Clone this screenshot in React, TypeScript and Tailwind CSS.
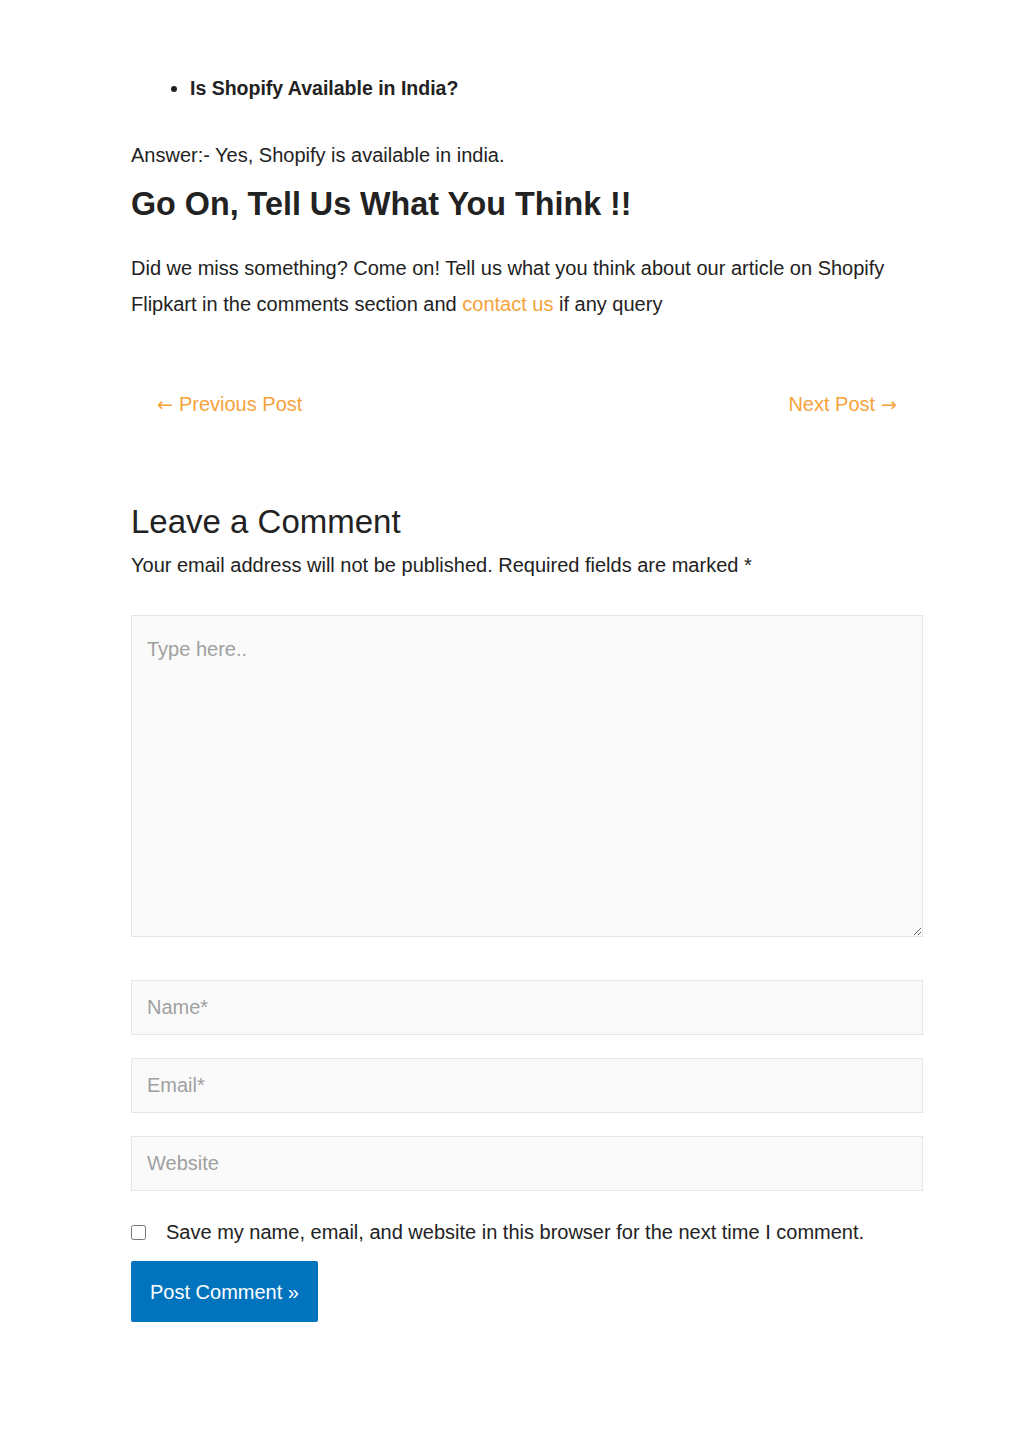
import React from "react";

const App: React.FC = () => {
	return (
		<div className="min-h-[1449px] bg-white font-['Liberation_Sans',Arial,sans-serif] text-[#222]">
			<div className="w-[792px] ml-[131px] pt-[75px]">
				<ul className="list-disc pl-[59px] text-[19.5px] leading-[27px] font-bold">
					<li>Is Shopify Available in India?</li>
				</ul>

				<p className="mt-[40px] text-[20px] leading-[27px]">
					Answer:- Yes, Shopify is available in india.
				</p>

				<h2 className="mt-[15px] text-[32.3px] leading-[40px] font-bold">
					Go On, Tell Us What You Think !!
				</h2>

				<p className="mt-[26px] text-[20px] leading-[36px]">
					Did we miss something? Come on! Tell us what you think about our article on Shopify
					Flipkart in the comments section and{" "}
					<a href="#" className="text-[#f5a23b]">
						contact us
					</a>{" "}
					if any query
				</p>

				<div className="mt-[70px] flex justify-between px-[26px] text-[20px] leading-[24px] text-[#f5a23b]">
					<a href="#" className="flex items-center gap-[6px]">
						<span className="font-['DejaVu_Sans',sans-serif] text-[19px] leading-[24px]">←</span>
						<span>Previous Post</span>
					</a>
					<a href="#" className="flex items-center gap-[6px]">
						<span>Next Post</span>
						<span className="font-['DejaVu_Sans',sans-serif] text-[19px] leading-[24px]">→</span>
					</a>
				</div>

				<h2 className="mt-[86px] text-[33px] leading-[40px] font-normal">Leave a Comment</h2>
				<p className="mt-[10px] text-[20px] leading-[27px]">
					Your email address will not be published. Required fields are marked *
				</p>

				<form className="mt-[36px] flex flex-col">
					<textarea
						placeholder="Type here.."
						className="h-[322px] w-full bg-[#fafafa] border border-[#e6e6e6] px-[15px] py-[20px] text-[20px] leading-[27px] placeholder:text-[#a0a0a0] outline-none resize-y"
					/>
					<input
						placeholder="Name*"
						className="mt-[43px] h-[55px] w-full bg-[#fafafa] border border-[#e6e6e6] px-[15px] text-[20px] placeholder:text-[#a0a0a0] outline-none"
					/>
					<input
						placeholder="Email*"
						className="mt-[23px] h-[55px] w-full bg-[#fafafa] border border-[#e6e6e6] px-[15px] text-[20px] placeholder:text-[#a0a0a0] outline-none"
					/>
					<input
						placeholder="Website"
						className="mt-[23px] h-[55px] w-full bg-[#fafafa] border border-[#e6e6e6] px-[15px] text-[20px] placeholder:text-[#a0a0a0] outline-none"
					/>
					<label className="mt-[28px] flex items-center gap-[20px] text-[20px] leading-[27px]">
						<input type="checkbox" className="w-[15px] h-[15px] m-0" />
						Save my name, email, and website in this browser for the next time I comment.
					</label>
					<div className="mt-[15px]">
						<button
							type="button"
							className="h-[61px] px-[19px] bg-[#0274be] text-white text-[20px] rounded-[2px]"
						>
							Post Comment »
						</button>
					</div>
				</form>
			</div>
		</div>
	);
};

export default App;
